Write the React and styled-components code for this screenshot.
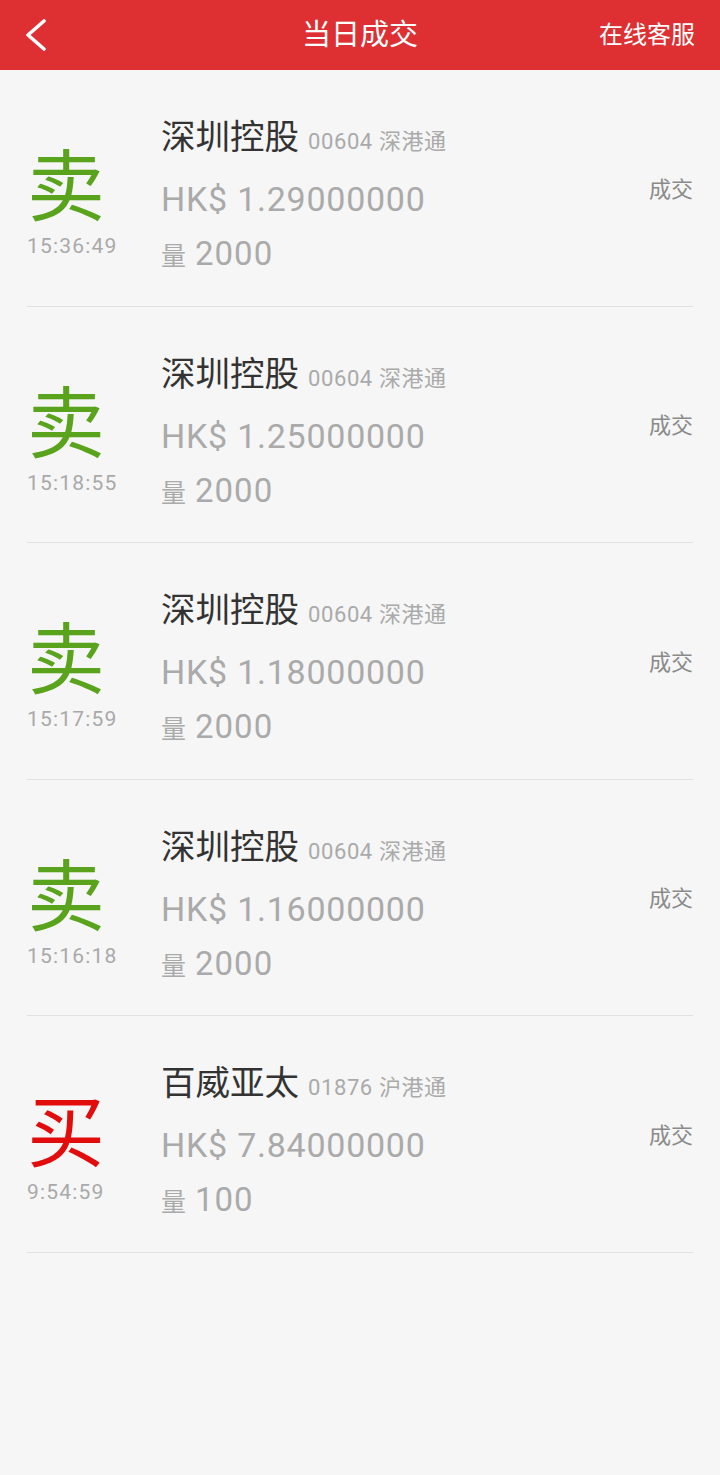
import React from 'react'
import styled, { createGlobalStyle } from 'styled-components'

const GlobalStyle = createGlobalStyle`
	html, body {
		margin: 0;
		padding: 0;
		background: #f6f6f6;
	}
	body {
		font-family: Roboto, "Noto Sans CJK SC", sans-serif;
	}
`

const Page = styled.div`
	width: 720px;
	min-height: 1475px;
	background: #f6f6f6;
`

const Header = styled.div`
	height: 70px;
	background: #de2f33;
	display: flex;
	align-items: center;
	justify-content: space-between;
	padding: 0 25px 0 22px;
	position: relative;
	color: #fff;
`

const Back = styled.div`
	width: 30px;
	height: 40px;
	display: flex;
	align-items: center;
`

const Title = styled.div`
	position: absolute;
	left: 0;
	right: 0;
	text-align: center;
	font-size: 29px;
	line-height: 70px;
	pointer-events: none;
`

const Service = styled.div`
	font-size: 24px;
	line-height: 70px;
`

const List = styled.div`
	padding: 0 27px;
`

const Row = styled.div`
	height: 236.5px;
	box-sizing: border-box;
	border-bottom: 1px solid #e1e1e1;
	display: flex;
	align-items: flex-start;
`

const Side = styled.div`
	width: 134px;
	padding-top: 79px;
	display: flex;
	flex-direction: column;
`

const Action = styled.div`
	font-size: 78px;
	line-height: 80px;
	color: ${props => (props.buy ? '#e20c0c' : '#5aa31c')};
`

const Time = styled.div`
	margin-top: 5px;
	font-size: 21px;
	line-height: 24px;
	letter-spacing: 1.2px;
	color: #a9a9a9;
`

const Main = styled.div`
	flex: 1;
	padding-top: 47px;
`

const NameLine = styled.div`
	display: flex;
	align-items: baseline;
	line-height: 40px;
`

const Name = styled.span`
	font-size: 34.5px;
	color: #333;
`

const Code = styled.span`
	margin-left: 9px;
	font-size: 22px;
	letter-spacing: 0.6px;
	color: #aaa;
`

const Price = styled.div`
	margin-top: 17px;
	font-size: 34px;
	line-height: 40px;
	letter-spacing: 0.75px;
	color: #aaa;
`

const Qty = styled.div`
	margin-top: 15px;
	line-height: 40px;
	color: #aaa;
	display: flex;
	align-items: baseline;
`

const QtyLabel = styled.span`
	font-size: 25px;
	margin-right: 9px;
`

const QtyValue = styled.span`
	font-size: 33px;
	letter-spacing: 1px;
`

const Status = styled.div`
	align-self: center;
	font-size: 22px;
	color: #8a8a8a;
	margin-bottom: 2px;
`

const trades = [
	{ buy: false, time: '15:36:49', name: '深圳控股', code: '00604 深港通', price: '1.29000000', qty: 2000 },
	{ buy: false, time: '15:18:55', name: '深圳控股', code: '00604 深港通', price: '1.25000000', qty: 2000 },
	{ buy: false, time: '15:17:59', name: '深圳控股', code: '00604 深港通', price: '1.18000000', qty: 2000 },
	{ buy: false, time: '15:16:18', name: '深圳控股', code: '00604 深港通', price: '1.16000000', qty: 2000 },
	{ buy: true, time: '9:54:59', name: '百威亚太', code: '01876 沪港通', price: '7.84000000', qty: 100 },
]

export default function App() {
	return (
		<Page>
			<GlobalStyle />
			<Header>
				<Back>
					<svg width="26" height="32" viewBox="0 0 26 32">
						<polyline points="22,2 6,16 22,30" fill="none" stroke="#fff" strokeWidth="3.6" strokeLinecap="round" strokeLinejoin="round" />
					</svg>
				</Back>
				<Title>当日成交</Title>
				<Service>在线客服</Service>
			</Header>
			<List>
				{trades.map((t, i) => (
					<Row key={i}>
						<Side>
							<Action buy={t.buy}>{t.buy ? '买' : '卖'}</Action>
							<Time>{t.time}</Time>
						</Side>
						<Main>
							<NameLine>
								<Name>{t.name}</Name>
								<Code>{t.code}</Code>
							</NameLine>
							<Price>HK$ {t.price}</Price>
							<Qty>
								<QtyLabel>量</QtyLabel>
								<QtyValue>{t.qty}</QtyValue>
							</Qty>
						</Main>
						<Status>成交</Status>
					</Row>
				))}
			</List>
		</Page>
	)
}
